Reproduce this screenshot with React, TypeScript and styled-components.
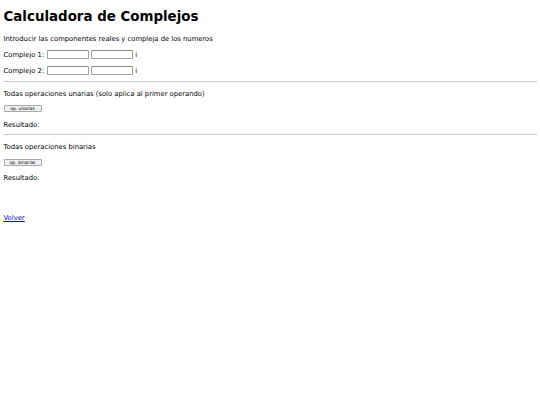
import React from "react";
import styled, { createGlobalStyle } from "styled-components";

const GlobalStyle = createGlobalStyle`
  html, body {
    margin: 0;
    padding: 0;
    background: #ffffff;
  }
  body {
    padding: 0 3.5px;
    font-family: "DejaVu Sans", Verdana, sans-serif;
    font-size: 6.8px;
    color: #000000;
  }
`;

const Page = styled.div`
  display: flex;
  flex-direction: column;
  padding-top: 9px;
`;

const Title = styled.h1`
  margin: 0 0 9px;
  font-size: 13.4px;
  font-weight: bold;
  line-height: 16px;
`;

const Text = styled.p<{ $gap?: number }>`
  margin: 0 0 ${p => p.$gap ?? 7}px;
  padding-top: 1px;
  line-height: 8px;
`;

const Row = styled.div<{ $gap?: number }>`
  display: flex;
  align-items: center;
  gap: 2px;
  height: 9px;
  margin-bottom: ${p => p.$gap ?? 7}px;
  line-height: 8px;
`;

const Label = styled.span`
  margin-right: 1px;
`;

const Field = styled.input`
  box-sizing: border-box;
  width: 42px;
  height: 9px;
  margin: 0;
  padding: 0;
  border: 1px solid #a3a3a3;
  border-top-color: #8c8c8c;
  border-radius: 1px;
  background: #ffffff;
`;

const Rule = styled.hr<{ $gap?: number }>`
  width: 100%;
  margin: 0 0 ${p => p.$gap ?? 7}px;
  border: none;
  border-top: 1px solid #c6c6c6;
`;

const Button = styled.button<{ $gap?: number }>`
  align-self: flex-start;
  box-sizing: border-box;
  width: 38px;
  height: 7px;
  margin: 0 0 ${p => p.$gap ?? 8}px;
  padding: 0;
  font-family: "DejaVu Sans", Verdana, sans-serif;
  font-size: 4.4px;
  line-height: 5px;
  color: #000000;
  background: #efefef;
  border: 1px solid #a8a8a8;
  border-radius: 1px;
`;

const Link = styled.a`
  align-self: flex-start;
  padding-top: 1px;
  color: #0000ee;
  text-decoration: underline;
  line-height: 8px;
`;

export default function App() {
  return (
    <>
      <GlobalStyle />
      <Page>
        <Title>Calculadora de Complejos</Title>
        <Text>Introducir las componentes reales y compleja de los numeros</Text>
        <Row>
          <Label>Complejo 1:</Label>
          <Field type="text" />
          <Field type="text" />
          <span>i</span>
        </Row>
        <Row $gap={6}>
          <Label>Complejo 2:</Label>
          <Field type="text" />
          <Field type="text" />
          <span>i</span>
        </Row>
        <Rule />
        <Text>Todas operaciones unarias (solo aplica al primer operando)</Text>
        <Button>op. unarias</Button>
        <Text $gap={5}>Resultado:</Text>
        <Rule />
        <Text $gap={8}>Todas operaciones binarias</Text>
        <Button $gap={7}>op. binarias</Button>
        <Text $gap={31}>Resultado:</Text>
        <Link href="#">Volver</Link>
      </Page>
    </>
  );
}
